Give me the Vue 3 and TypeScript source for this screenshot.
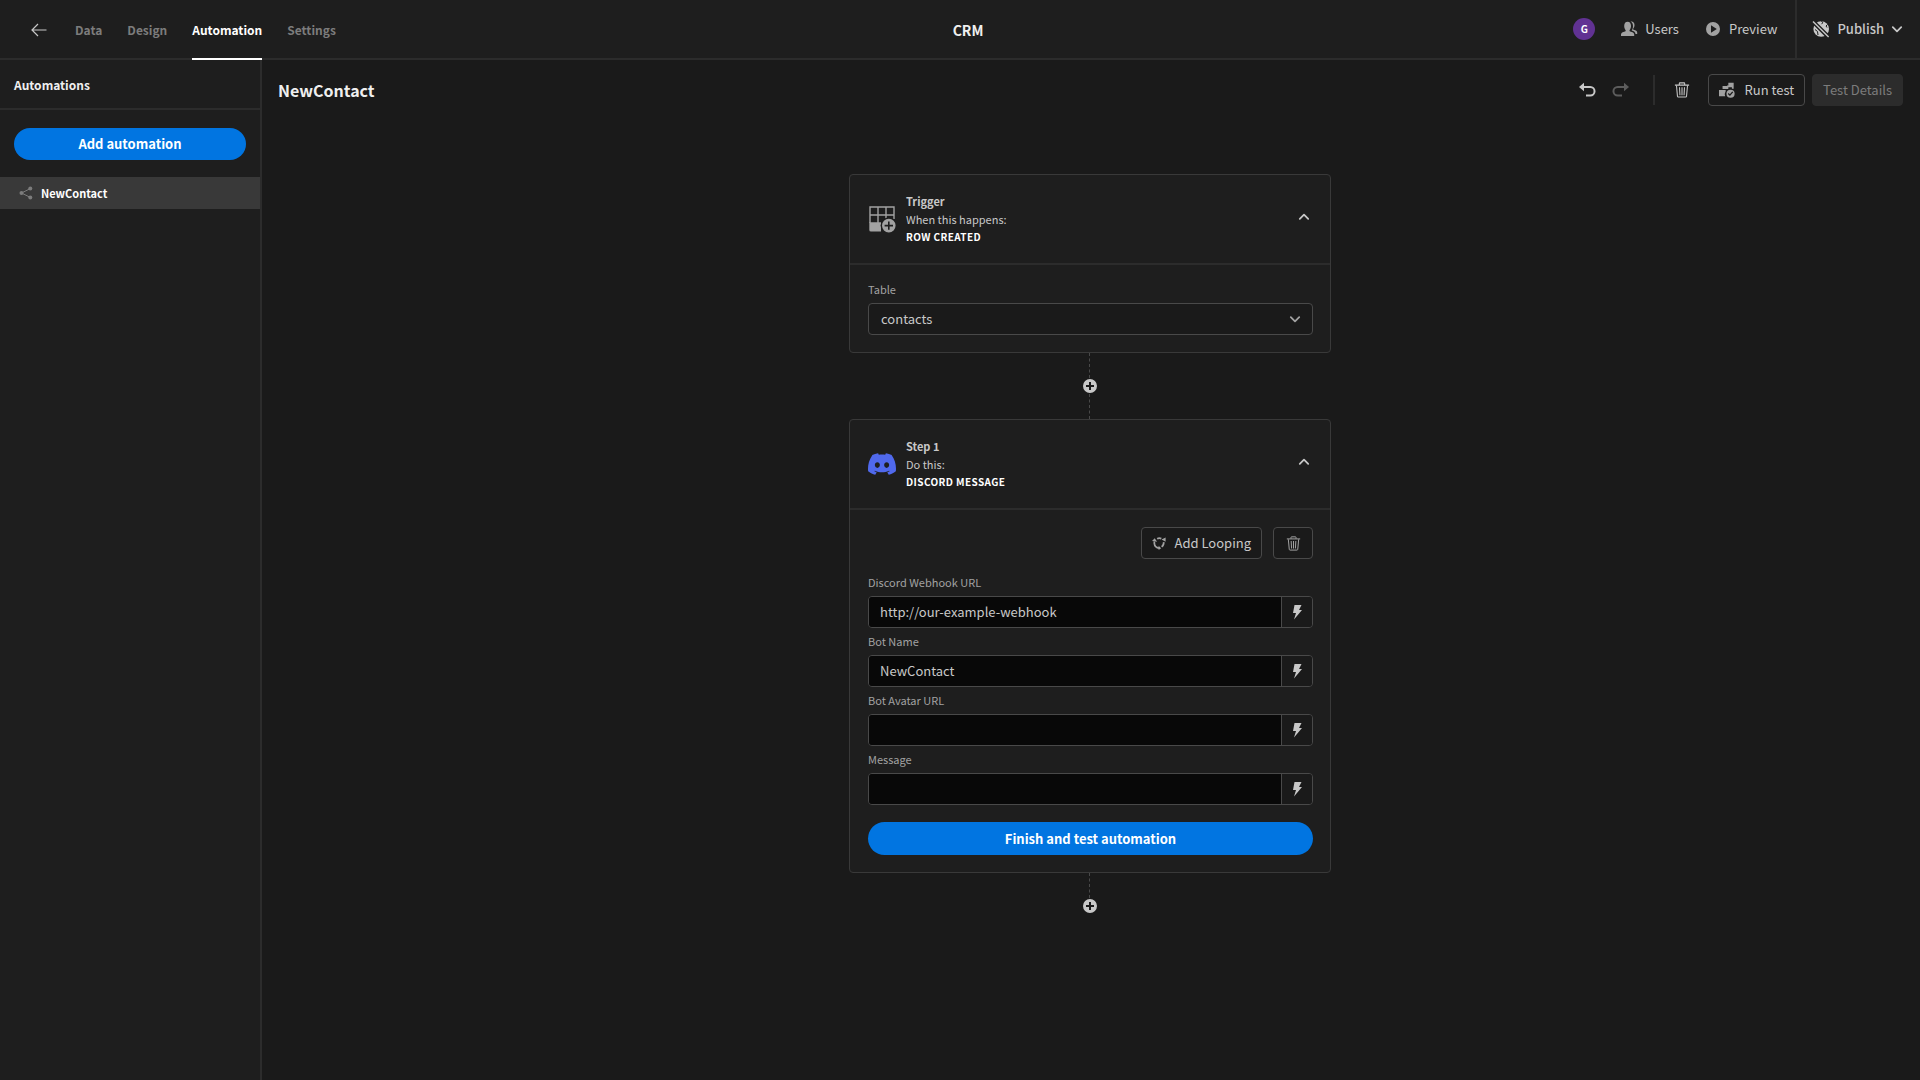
<script setup lang="ts">
import { ref } from 'vue'

interface Field {
  id: string
  label: string
  value: string
}

const tabs = ['Data', 'Design', 'Automation', 'Settings']
const activeTab = ref('Automation')
const table = ref('contacts')
const triggerOpen = ref(true)
const stepOpen = ref(true)

const fields = ref<Field[]>([
  { id: 'webhook-url', label: 'Discord Webhook URL', value: 'http://our-example-webhook' },
  { id: 'bot-name', label: 'Bot Name', value: 'NewContact' },
  { id: 'bot-avatar', label: 'Bot Avatar URL', value: '' },
  { id: 'message', label: 'Message', value: '' },
])
</script>

<template>
  <div class="app">
    <svg class="sprite" aria-hidden="true">
      <symbol id="i-trash" viewBox="0 0 18 18">
        <path d="M1 3.500h16M6 3.200V1.600q0-.6.6-.6h4.800q.6 0 .6.600v1.600" fill="none" stroke="currentColor" stroke-width="1.200" />
        <path d="M2.800 4l1.100 12q.1.9 1 .9h8.200q.9 0 1-.9L15.200 4M6.200 6l.5 9M9 6v9M11.800 6l-.5 9" fill="none" stroke="currentColor" stroke-width="1.200" />
      </symbol>
      <symbol id="i-add" viewBox="0 0 16 16">
        <path fill-rule="evenodd" d="M8 1a7 7 0 1 0 0 14A7 7 0 0 0 8 1zm4 8H9v3H7V9H4V7h3V4h2v3h3z" fill="currentColor" />
      </symbol>
      <symbol id="i-chevron" viewBox="0 0 12 12">
        <path d="M1.800 4.200L6 8.300l4.200-4.100" fill="none" stroke="currentColor" stroke-width="1.800" stroke-linecap="round" stroke-linejoin="round" />
      </symbol>
    </svg>

    <header class="topbar">
      <div class="topbar-left">
        <button class="plain back" aria-label="Back">
          <svg width="18" height="18" viewBox="0 0 18 18"><path d="M16.500 9H2M8 3L2 9l6 6" fill="none" stroke="currentColor" stroke-width="1.200" /></svg>
        </button>
        <nav class="tabs">
          <a v-for="tab in tabs" :key="tab" href="#" class="tab" :class="{ active: tab === activeTab }" @click.prevent="activeTab = tab">{{ tab }}</a>
        </nav>
      </div>
      <h1 class="app-name">CRM</h1>
      <div class="topbar-right">
        <span class="avatar">G</span>
        <button class="plain action">
          <svg width="18" height="18" viewBox="0 0 18 18" fill="currentColor">
            <path d="M1 16v-1.600c0-1.500 1.600-2.300 4-2.900.7-.2.900-.9.500-1.500C4.600 8.900 4.200 7.400 4.200 5.800 4.200 3.300 5.500 1.700 7.600 1.700S11 3.300 11 5.800c0 1.600-.4 3.100-1.300 4.200-.4.600-.2 1.300.5 1.500 2.400.6 4 1.400 4 2.900V16z" />
            <path d="M10.500 1.600c2.200-.6 4 .8 4 3.400 0 1.500-.5 2.700-1.200 3.500-.4.500-.2 1.100.4 1.300 2 .6 3.500 1.300 3.500 2.700V14h-1.700c-.1-1.900-1.600-2.900-3.800-3.500.900-1.300 1.300-2.900 1.300-4.600 0-1.800-.8-3.400-2.500-4.300z" />
          </svg>
          Users
        </button>
        <button class="plain action">
          <svg width="18" height="18" viewBox="0 0 18 18"><path fill-rule="evenodd" d="M9 2a7 7 0 1 0 0 14A7 7 0 0 0 9 2zM7 5.300v7.400L12.800 9z" fill="currentColor" /></svg>
          Preview
        </button>
        <button class="plain publish">
          <svg width="18" height="18" viewBox="0 0 18 18">
            <circle cx="9.200" cy="9" r="7.800" fill="currentColor" />
            <path d="M9.500 1l1.200 1.800-1.200 1.400M15.500 4.500l-1.500 1.500 1 1.500M3 9.500l2.500 2 .5 3.500" fill="none" stroke="#1e1e1e" stroke-width="1" />
            <path d="M0 .6L17.500 18" stroke="#1e1e1e" stroke-width="4.200" />
            <path d="M1 1.600L16.600 17" stroke="currentColor" stroke-width="1.400" />
          </svg>
          Publish
          <svg class="chev" width="12" height="12"><use href="#i-chevron" /></svg>
        </button>
      </div>
    </header>

    <div class="body">
      <aside class="sidebar">
        <h2 class="side-title">Automations</h2>
        <div class="side-action"><button class="cta">Add automation</button></div>
        <a href="#" class="side-item" @click.prevent>
          <svg width="14" height="14" viewBox="0 0 14 14" fill="currentColor">
            <path d="M11.500 2.500L2.500 7l9 4.500" fill="none" stroke="currentColor" />
            <circle cx="11.300" cy="2.500" r="2" /><circle cx="2.500" cy="7" r="2" /><circle cx="11.300" cy="11.500" r="2" />
          </svg>
          NewContact
        </a>
      </aside>

      <main class="main">
        <div class="toolbar">
          <h2 class="title">NewContact</h2>
          <div class="tools">
            <button class="plain icon-btn" aria-label="Undo">
              <svg width="18" height="18" viewBox="0 0 18 18"><path d="M3 6h9.300a3.700 3.700 0 0 1 0 8.500H8" fill="none" stroke="currentColor" stroke-width="2" /><path d="M1 6l5-4.200v8.400z" fill="currentColor" /></svg>
            </button>
            <button class="plain icon-btn muted" aria-label="Redo" disabled>
              <svg width="18" height="18" viewBox="0 0 18 18"><path d="M15 6H5.700a3.700 3.700 0 0 0 0 8.500H10" fill="none" stroke="currentColor" stroke-width="2" /><path d="M17 6l-5-4.200v8.400z" fill="currentColor" /></svg>
            </button>
            <span class="divider"></span>
            <button class="plain icon-btn" aria-label="Delete automation"><svg width="16" height="16"><use href="#i-trash" /></svg></button>
            <div class="tool-buttons">
              <button class="btn">
                <svg width="16" height="16" viewBox="0 0 18 18" fill="currentColor">
                  <path d="M0 9h7.500v1.500A6 6 0 0 0 7 16H0z" />
                  <path d="M4 8V4.500h5V4h1.500V.8h6v6.700h-2V5.800h-4V8z" />
                  <path fill-rule="evenodd" d="M13 8.600a4.600 4.600 0 1 0 0 9.200 4.600 4.600 0 0 0 0-9.200zm-.7 7.100l-2.400-2.200 1-1 1.300 1.200 2.700-3 1.100.9z" />
                </svg>
                Run test
              </button>
              <button class="btn disabled" disabled>Test Details</button>
            </div>
          </div>
        </div>

        <div class="flow">
          <section class="card">
            <header class="card-head">
              <svg class="card-icon" width="28" height="28" viewBox="0 0 28 28">
                <path d="M2 18V2h24v12M2 10h24M10 2v16M18 2v12" fill="none" stroke="currentColor" stroke-width="1.400" />
                <path d="M1.300 17.300H13v9.200H3q-1.700 0-1.700-1.500z" fill="currentColor" />
                <circle cx="20.800" cy="20.600" r="8.200" fill="#1e1e1e" />
                <path fill-rule="evenodd" d="M20.800 13.800a6.800 6.800 0 1 0 0 13.600 6.800 6.800 0 0 0 0-13.600zm4.200 7.600h-3.400v3.400h-1.600v-3.400h-3.400v-1.600h3.400v-3.400h1.600v3.400h3.400z" fill="currentColor" />
              </svg>
              <div class="card-text">
                <h3>Trigger</h3>
                <p>When this happens:</p>
                <strong>ROW CREATED</strong>
              </div>
              <button class="plain toggle" aria-label="Toggle trigger" @click="triggerOpen = !triggerOpen"><svg width="12" height="12"><use href="#i-chevron" /></svg></button>
            </header>
            <div v-if="triggerOpen" class="card-body">
              <label class="label" for="table">Table</label>
              <div class="select">
                <select id="table" v-model="table"><option>contacts</option></select>
                <svg width="12" height="12"><use href="#i-chevron" /></svg>
              </div>
            </div>
          </section>

          <div class="connector">
            <span class="line"></span>
            <button class="plain" aria-label="Add step"><svg width="16" height="16"><use href="#i-add" /></svg></button>
            <span class="line"></span>
          </div>

          <section class="card">
            <header class="card-head">
              <svg class="card-icon discord" width="28" height="28" viewBox="0 0 24 24">
                <path fill="currentColor" d="M20.317 4.3698a19.7913 19.7913 0 00-4.8851-1.5152.0741.0741 0 00-.0785.0371c-.211.3753-.4447.8648-.6083 1.2495-1.8447-.2762-3.68-.2762-5.4868 0-.1636-.3933-.4058-.8742-.6177-1.2495a.077.077 0 00-.0785-.037 19.7363 19.7363 0 00-4.8852 1.515.0699.0699 0 00-.0321.0277C.5334 9.0458-.319 13.5799.0992 18.0578a.0824.0824 0 00.0312.0561c2.0528 1.5076 4.0413 2.4228 5.9929 3.0294a.0777.0777 0 00.0842-.0276c.4616-.6304.8731-1.2952 1.226-1.9942a.076.076 0 00-.0416-.1057c-.6528-.2476-1.2743-.5495-1.8722-.8923a.077.077 0 01-.0076-.1277c.1258-.0943.2517-.1923.3718-.2914a.0743.0743 0 01.0776-.0105c3.9278 1.7933 8.18 1.7933 12.0614 0a.0739.0739 0 01.0785.0095c.1202.099.246.1981.3728.2924a.077.077 0 01-.0066.1276 12.2986 12.2986 0 01-1.873.8914.0766.0766 0 00-.0407.1067c.3604.698.7719 1.3628 1.225 1.9932a.076.076 0 00.0842.0286c1.961-.6067 3.9495-1.5219 6.0023-3.0294a.077.077 0 00.0313-.0552c.5004-5.177-.8382-9.6739-3.5485-13.6604a.061.061 0 00-.0312-.0286zM8.02 15.3312c-1.1825 0-2.1569-1.0857-2.1569-2.419 0-1.3332.9555-2.4189 2.157-2.4189 1.2108 0 2.1757 1.0952 2.1568 2.419 0 1.3332-.9555 2.4189-2.1569 2.4189zm7.9748 0c-1.1825 0-2.1569-1.0857-2.1569-2.419 0-1.3332.9554-2.4189 2.1569-2.4189 1.2108 0 2.1757 1.0952 2.1568 2.419 0 1.3332-.946 2.4189-2.1568 2.4189Z" />
              </svg>
              <div class="card-text">
                <h3>Step 1</h3>
                <p>Do this:</p>
                <strong>DISCORD MESSAGE</strong>
              </div>
              <button class="plain toggle" aria-label="Toggle step" @click="stepOpen = !stepOpen"><svg width="12" height="12"><use href="#i-chevron" /></svg></button>
            </header>
            <div v-if="stepOpen" class="card-body">
              <div class="step-actions">
                <button class="btn">
                  <svg width="14" height="14" viewBox="0 0 18 18">
                    <path d="M6.600 3.600A6.300 6.300 0 0 1 12 3.400M15 8a6.300 6.300 0 0 1-2.600 6M9 15.500A6.300 6.300 0 0 1 3 9.500V7" fill="none" stroke="currentColor" stroke-width="2.200" />
                    <path d="M0 6.500L3.500 3l3 4.500zM12.300 4.500L17.500 2v5.500zM8.500 12.500l3.300 3.200L8.500 18z" fill="currentColor" />
                  </svg>
                  Add Looping
                </button>
                <button class="btn square" aria-label="Delete step"><svg width="15" height="15"><use href="#i-trash" /></svg></button>
              </div>
              <div v-for="field in fields" :key="field.id" class="field">
                <label class="label" :for="field.id">{{ field.label }}</label>
                <div class="input-group">
                  <input :id="field.id" v-model="field.value" type="text" />
                  <button class="plain bolt" aria-label="Insert binding">
                    <svg width="16" height="16" viewBox="0 0 16 16"><path d="M5.500 1h7L10 6h3L5 15.500 7 9H4z" fill="currentColor" /></svg>
                  </button>
                </div>
              </div>
              <button class="cta finish">Finish and test automation</button>
            </div>
          </section>

          <div class="connector">
            <span class="line"></span>
            <button class="plain" aria-label="Add step"><svg width="16" height="16"><use href="#i-add" /></svg></button>
          </div>
        </div>
      </main>
    </div>
  </div>
</template>

<style>
body {
  margin: 0;
  background: #1a1a1a;
}
</style>

<style scoped>
* {
  box-sizing: border-box;
}
.app {
  display: flex;
  flex-direction: column;
  min-height: 100vh;
  color: #c8c8c8;
  font-family: "Noto Sans CJK SC", "Open Sans", sans-serif;
  font-size: 13px;
  line-height: 18px;
}
.sprite {
  position: absolute;
  width: 0;
  height: 0;
}
svg {
  display: block;
  flex: none;
}
h1,
h2,
h3,
p {
  margin: 0;
}
a {
  color: inherit;
  text-decoration: none;
}
button,
input,
select {
  font: inherit;
  color: inherit;
}
button {
  cursor: pointer;
}
.plain {
  display: flex;
  align-items: center;
  padding: 0;
  border: 0;
  background: none;
}

.topbar {
  display: grid;
  grid-template-columns: 1fr auto 1fr;
  align-items: center;
  height: 60px;
  padding-left: 16px;
  background: #1e1e1e;
  box-shadow: inset 0 -2px 0 #2c2c2c;
}
.topbar-left,
.topbar-right,
.tabs {
  display: flex;
  align-items: center;
  height: 60px;
}
.topbar-left {
  gap: 27px;
  padding-left: 14px;
}
.tabs {
  gap: 25px;
}
.tab {
  display: flex;
  align-items: center;
  height: 60px;
  border-top: 2px solid transparent;
  border-bottom: 2px solid transparent;
  font-size: 12px;
  font-weight: 700;
  color: #7c7c7c;
}
.tab.active {
  color: #fff;
  border-bottom-color: #fff;
}
.app-name {
  font-size: 14px;
  font-weight: 700;
  color: #efefef;
}
.topbar-right {
  justify-content: flex-end;
  gap: 25px;
  padding-bottom: 2px;
}
.avatar {
  width: 22px;
  height: 22px;
  border-radius: 50%;
  background: #613293;
  color: #fff;
  font-size: 10px;
  font-weight: 700;
  line-height: 22px;
  text-align: center;
}
.action {
  gap: 7px;
}
.action svg {
  color: #a2a2a2;
}
.publish {
  align-self: stretch;
  gap: 7px;
  padding: 0 17px 0 15px;
  margin-left: -7px;
  border-left: 2px solid #2c2c2c;
  font-weight: 500;
}

.body {
  display: flex;
  flex: 1;
}
.sidebar {
  flex: none;
  width: 262px;
  background: #1e1e1e;
  border-right: 2px solid #2c2c2c;
}
.side-title {
  padding: 16px 14px 14px;
  border-bottom: 2px solid #2c2c2c;
  font-size: 12px;
  font-weight: 700;
  color: #efefef;
}
.side-action {
  padding: 18px 14px 17px;
}
.cta {
  display: block;
  width: 100%;
  height: 32px;
  padding: 0;
  border: 0;
  border-radius: 17px;
  background: #0175e1;
  color: #fff;
  font-weight: 700;
}
.side-item {
  display: flex;
  align-items: center;
  gap: 8px;
  height: 32px;
  padding-left: 19px;
  background: #393939;
  color: #fff;
  font-size: 11px;
  font-weight: 700;
}
.side-item svg {
  color: #7c7c7c;
}

.main {
  flex: 1;
  min-width: 0;
}
.toolbar {
  display: flex;
  align-items: center;
  justify-content: space-between;
  padding: 14px 17px 14px 16px;
}
.title {
  font-size: 16px;
  font-weight: 700;
  line-height: 24px;
  color: #efefef;
}
.tools {
  display: flex;
  align-items: center;
  gap: 16px;
}
.muted {
  color: #5c5c5c;
}
.divider {
  width: 2px;
  height: 30px;
  margin: 0 3px 0 7px;
  background: #2c2c2c;
}
.tool-buttons {
  display: flex;
  gap: 7px;
  margin-left: 2px;
}
.btn {
  display: flex;
  align-items: center;
  justify-content: center;
  gap: 9px;
  height: 32px;
  padding: 0 10px;
  border: 1px solid #494949;
  border-radius: 4px;
  background: #1a1a1a;
}
.btn svg {
  color: #a2a2a2;
}
.btn.disabled {
  background: #2c2c2c;
  border-color: #2c2c2c;
  color: #7c7c7c;
}
.btn.square {
  width: 40px;
  padding: 0;
}

.flow {
  display: flex;
  flex-direction: column;
  align-items: center;
  padding: 54px 18px 48px 16px;
}
.card {
  width: 100%;
  max-width: 482px;
  border: 1px solid #393939;
  border-radius: 4px;
  background: #1e1e1e;
}
.card-head {
  display: flex;
  align-items: center;
  gap: 10px;
  padding: 17px 20px 17px 18px;
  border-bottom: 2px solid #2c2c2c;
}
.card-icon {
  color: #a2a2a2;
}
.discord {
  color: #5069ec;
}
.card-text {
  flex: 1;
  font-size: 11px;
}
.card-text h3 {
  font-size: 11px;
  font-weight: 700;
}
.card-text strong {
  display: block;
  font-size: 10px;
  letter-spacing: 0.04em;
  color: #fff;
}
.toggle {
  padding-bottom: 4px;
}
.toggle svg {
  transform: rotate(180deg);
}
.card-head {
  min-height: 90px;
}
.card-body {
  padding: 17px 17px 17px 18px;
}
.label {
  display: block;
  margin-bottom: 6px;
  font-size: 11px;
  line-height: 15px;
  color: #a2a2a2;
}
.select {
  display: grid;
  align-items: center;
}
.select select,
.select svg {
  grid-area: 1 / 1;
}
.select svg {
  justify-self: end;
  margin-right: 12px;
  pointer-events: none;
  color: #a2a2a2;
}
.select select {
  appearance: none;
  width: 100%;
  height: 32px;
  padding: 0 12px;
  border: 1px solid #494949;
  border-radius: 4px;
  background: #1a1a1a;
}
.step-actions {
  display: flex;
  justify-content: flex-end;
  gap: 11px;
  margin-bottom: 16px;
}
.field + .field {
  margin-top: 6px;
}
.input-group {
  display: flex;
  height: 32px;
  border: 1px solid #494949;
  border-radius: 4px;
  overflow: hidden;
}
.input-group input {
  flex: 1;
  min-width: 0;
  padding: 0 11px 1px;
  border: 0;
  background: #080808;
  outline: none;
}
.bolt {
  justify-content: center;
  width: 31px;
  border-left: 1px solid #494949;
  background: #1a1a1a;
}
.finish {
  height: 33px;
  margin-top: 17px;
}
.connector {
  display: flex;
  flex-direction: column;
  align-items: center;
}
.line {
  width: 2px;
  height: 25px;
  border-left: 1px dashed #494949;
}
</style>
